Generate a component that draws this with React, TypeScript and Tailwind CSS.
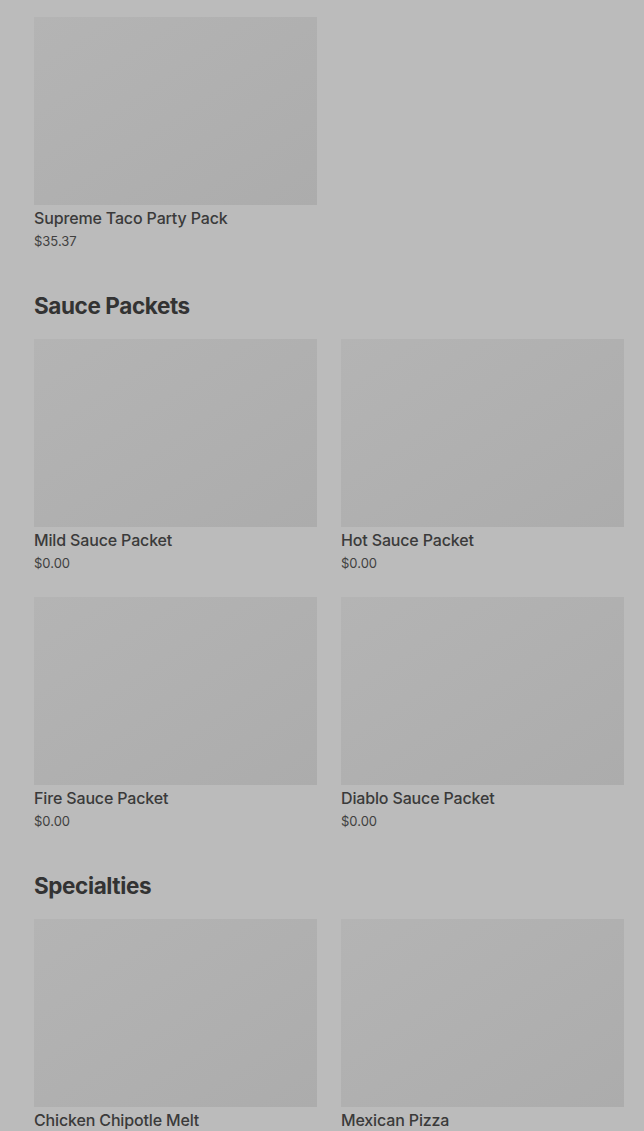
type Item = { name: string; price: string };

const sections: { title?: string; items: Item[] }[] = [
  { items: [{ name: "Supreme Taco Party Pack", price: "$35.37" }] },
  {
    title: "Sauce Packets",
    items: [
      { name: "Mild Sauce Packet", price: "$0.00" },
      { name: "Hot Sauce Packet", price: "$0.00" },
      { name: "Fire Sauce Packet", price: "$0.00" },
      { name: "Diablo Sauce Packet", price: "$0.00" },
    ],
  },
  {
    title: "Specialties",
    items: [
      { name: "Chicken Chipotle Melt", price: "$0.00" },
      { name: "Mexican Pizza", price: "$0.00" },
    ],
  },
];

function ItemCard({ item }: { item: Item }) {
  return (
    <div className="flex flex-col">
      <div className="h-[188px] w-full bg-gradient-to-br from-[#b4b4b4] to-[#acacac]" />
      <p className="mt-[3px] text-[16px] font-medium leading-5 tracking-[-0.15px] text-[#3a3a3a]">
        {item.name}
      </p>
      <p className="mt-1 text-[13px] leading-[18px] text-[#404040]">{item.price}</p>
    </div>
  );
}

export default function App() {
  return (
    <div
      className="h-[1131px] overflow-hidden bg-[#bbbbbb] pl-[34px] pr-5 pt-[17px]"
      style={{ fontFamily: "Inter, 'Noto Sans', sans-serif" }}
    >
      {sections.map((section, i) => (
        <section key={i} className={i > 0 ? "mt-10" : ""}>
          {section.title && (
            <h2 className="mb-[17px] text-[22.5px] font-bold leading-8 tracking-[-0.4px] text-[#333333]">
              {section.title}
            </h2>
          )}
          <div className="grid grid-cols-2 gap-x-6 gap-y-[25px]">
            {section.items.map((item) => (
              <ItemCard key={item.name} item={item} />
            ))}
          </div>
        </section>
      ))}
    </div>
  );
}
